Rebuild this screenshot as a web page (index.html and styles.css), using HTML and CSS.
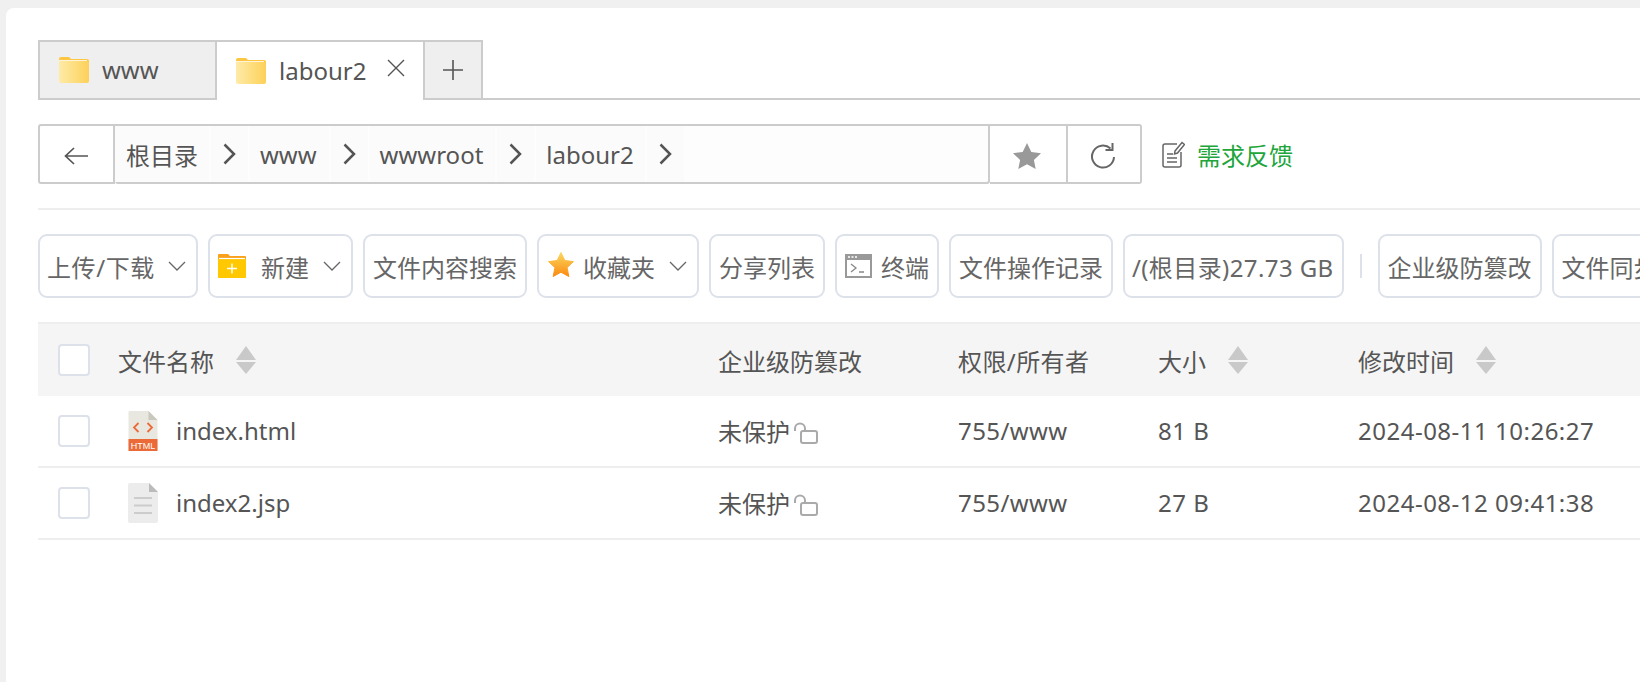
FILE: index.html
```html
<!DOCTYPE html>
<html lang="zh">
<head>
<meta charset="utf-8">
<title>文件管理</title>
<link rel="stylesheet" href="styles.css">
</head>
<body>
<svg class="defs" width="0" height="0" aria-hidden="true">
  <defs>
    <linearGradient id="folderGrad" x1="0" x2="1" y1="0" y2="0"><stop offset="0" stop-color="#feeba8"/><stop offset="1" stop-color="#fdd158"/></linearGradient>
    <linearGradient id="starGrad" x1="0" x2="0" y1="0" y2="1"><stop offset="0" stop-color="#fbd75c"/><stop offset="1" stop-color="#fb8a12"/></linearGradient>
    <symbol id="folder" viewBox="0 0 30 26"><path d="M0 2a2 2 0 0 1 2-2h8l2 2h16a2 2 0 0 1 2 2v2H0z" fill="#fdc743"/><path d="M0 4h28a2 2 0 0 1 2 2v18a2 2 0 0 1-2 2H2a2 2 0 0 1-2-2z" fill="url(#folderGrad)"/><path d="M0 3.500h28" stroke="#fff" stroke-opacity=".8" stroke-width="1"/></symbol>
    <symbol id="chev" viewBox="0 0 18 10"><path d="M1 1l8 8 8-8" fill="none" stroke="#666" stroke-width="1.300"/></symbol>
    <symbol id="crumb" viewBox="0 0 13 22"><path d="M1.500 1.500L11 11l-9.500 9.500" fill="none" stroke="#555" stroke-width="2.500"/></symbol>
    <symbol id="sort" viewBox="0 0 20 28"><path d="M10 0l10 14H0z" fill="#c9c9c9"/><path d="M0 16h20L10 28z" fill="#c9c9c9"/></symbol>
    <symbol id="lock" viewBox="0 0 24 22"><path d="M1 9V6.500a5 5 0 0 1 10 0V9" fill="none" stroke="#aaa" stroke-width="2"/><rect x="7" y="9" width="16" height="12" rx="2" fill="#fff" stroke="#aaa" stroke-width="2"/></symbol>
  </defs>
</svg>
<main class="card">
  <nav class="tabs">
    <div class="tab tab-first">
      <svg class="folder-icon"><use href="#folder"/></svg><span>www</span>
    </div>
    <div class="tab tab-active">
      <svg class="folder-icon"><use href="#folder"/></svg><span>labour2</span>
      <svg class="close-icon" viewBox="0 0 18 18"><path d="M1 1l16 16M17 1L1 17" stroke="#555" stroke-width="1.400" fill="none"/></svg>
    </div>
    <div class="tab tab-add">
      <svg class="plus-icon" viewBox="0 0 20 20"><path d="M10 0v20M0 10h20" stroke="#555" stroke-width="1.600" fill="none"/></svg>
    </div>
    <div class="tab-rest"></div>
  </nav>

  <div class="address">
    <button class="addr-btn back">
      <svg class="back-icon" viewBox="0 0 24 18"><path d="M24 9H1.500M10 1L1.500 9l8.500 8" fill="none" stroke="#555" stroke-width="1.700"/></svg>
    </button>
    <div class="path">
      <span class="seg seg-text seg-root">根目录</span><span class="seg seg-arrow"><svg class="crumb-icon"><use href="#crumb"/></svg></span>
      <span class="seg seg-text">www</span><span class="seg seg-arrow"><svg class="crumb-icon"><use href="#crumb"/></svg></span>
      <span class="seg seg-text">wwwroot</span><span class="seg seg-arrow"><svg class="crumb-icon"><use href="#crumb"/></svg></span>
      <span class="seg seg-text seg-last">labour2</span><span class="seg seg-arrow"><svg class="crumb-icon"><use href="#crumb"/></svg></span>
    </div>
    <button class="addr-btn star">
      <svg class="star-icon" viewBox="0 0 28 26"><path d="M14 0l4.300 9 9.700 1.200-7.100 6.700L22.700 26 14 21.300 5.300 26l1.800-9.100L0 10.200 9.700 9z" fill="#999"/></svg>
    </button>
    <button class="addr-btn refresh">
      <svg class="refresh-icon" viewBox="0 0 26 26"><path d="M20.500 5.500A11 11 0 1 0 24 14" fill="none" stroke="#666" stroke-width="2"/><path d="M22.500 0v7h-7" fill="none" stroke="#666" stroke-width="2"/></svg>
    </button>
    <a class="feedback">
      <svg class="feedback-icon" viewBox="0 0 23 27"><path d="M15 3H3a2 2 0 0 0-2 2v19a2 2 0 0 0 2 2h14a2 2 0 0 0 2-2V11" fill="none" stroke="#666" stroke-width="1.500"/><path d="M5 13h6M5 17h10M5 21h10" stroke="#666" stroke-width="1.500"/><path d="M13 10l7-8.500 2.500 2-7 8.500-3 1z" fill="none" stroke="#666" stroke-width="1.500"/></svg>
      <span>需求反馈</span>
    </a>
  </div>

  <div class="rule"></div>

  <div class="toolbar">
    <button class="tool tool-upload">上传/下载<svg class="chev-icon"><use href="#chev"/></svg></button>
    <button class="tool tool-new">
      <svg class="new-icon" viewBox="0 0 28 24"><path d="M0 1a1 1 0 0 1 1-1h9l2 2h15a1 1 0 0 1 1 1v3H0z" fill="#f9a11b"/><path d="M0 5h28v19H0z" fill="#ffc800"/><path d="M1 4.500h26" stroke="#fff" stroke-width="1.200"/><path d="M14 9.500v10M9 14.500h10" stroke="#fff" stroke-width="1.400"/></svg>
      <span>新建</span><svg class="chev-icon"><use href="#chev"/></svg>
    </button>
    <button class="tool">文件内容搜索</button>
    <button class="tool tool-fav">
      <svg class="fav-icon" viewBox="0 0 26 25"><path d="M13 .5l3.800 8 8.700 1.100-6.400 6 1.700 8.900-7.800-4.300-7.800 4.300 1.700-8.900-6.400-6 8.700-1.100z" fill="url(#starGrad)" stroke="url(#starGrad)" stroke-linejoin="round" stroke-width="1"/></svg>
      <span>收藏夹</span><svg class="chev-icon"><use href="#chev"/></svg>
    </button>
    <button class="tool">分享列表</button>
    <button class="tool tool-term">
      <svg class="term-icon" viewBox="0 0 27 24"><rect x="1" y="1" width="25" height="22" fill="#fff" stroke="#999" stroke-width="2"/><path d="M0 0h27v6H0z" fill="#999"/><path d="M3 3h2M6.500 3h2M10 3h2" stroke="#fff" stroke-width="1.500"/><path d="M6 10l5 4-5 4M14 18h5" fill="none" stroke="#888" stroke-width="1.300"/></svg>
      <span>终端</span>
    </button>
    <button class="tool">文件操作记录</button>
    <button class="tool tool-disk">/(根目录)27.73 GB</button>
    <span class="tool-sep"></span>
    <button class="tool">企业级防篡改</button>
    <button class="tool">文件同步</button>
  </div>

  <section class="table">
    <div class="row row-head">
      <div class="col-check"><span class="check"></span></div>
      <div class="col-name">文件名称<svg class="sort-icon"><use href="#sort"/></svg></div>
      <div class="col-guard">企业级防篡改</div>
      <div class="col-perm">权限/所有者</div>
      <div class="col-size">大小<svg class="sort-icon"><use href="#sort"/></svg></div>
      <div class="col-time">修改时间<svg class="sort-icon"><use href="#sort"/></svg></div>
    </div>
    <div class="row row-body">
      <div class="col-check"><span class="check"></span></div>
      <div class="col-name">
        <svg class="file-icon" viewBox="0 0 29 40"><path d="M0 1a1 1 0 0 1 1-1h19l9 9v31H0z" fill="#e9e8e0"/><path d="M20 0l9 9h-9z" fill="#c9c8be"/><path d="M10 12l-4.500 4.500L10 21M19 12l4.500 4.500L19 21" fill="none" stroke="#ec6a37" stroke-width="1.800"/><path d="M0 28h29v12H0z" fill="#ec6a37"/><text class="file-tag" x="14.500" y="37.500" text-anchor="middle">HTML</text></svg>
        <span class="file-name">index.html</span>
      </div>
      <div class="col-guard">未保护<svg class="lock-icon"><use href="#lock"/></svg></div>
      <div class="col-perm">755/www</div>
      <div class="col-size">81 B</div>
      <div class="col-time">2024-08-11 10:26:27</div>
    </div>
    <div class="row row-body">
      <div class="col-check"><span class="check"></span></div>
      <div class="col-name">
        <svg class="file-icon" viewBox="0 0 30 40"><path d="M0 2a2 2 0 0 1 2-2h19l9 9v29a2 2 0 0 1-2 2H2a2 2 0 0 1-2-2z" fill="#ececec"/><path d="M21 0l9 9h-9z" fill="#bbb"/><path d="M6 15h18M6 22.500h18M6 30h18" stroke="#ccc" stroke-width="2"/></svg>
        <span class="file-name">index2.jsp</span>
      </div>
      <div class="col-guard">未保护<svg class="lock-icon"><use href="#lock"/></svg></div>
      <div class="col-perm">755/www</div>
      <div class="col-size">27 B</div>
      <div class="col-time">2024-08-12 09:41:38</div>
    </div>
  </section>
</main>
</body>
</html>
```
FILE: styles.css
```css
* { box-sizing: border-box; }
html, body { height: 100%; margin: 0; overflow: hidden; }
body {
  padding: 8px 0 0 6px;
  background: #f0f0f0;
  color: #555;
  font-family: "Noto Sans", "Noto Sans CJK SC", sans-serif;
  font-size: 24px;
}
.defs { position: absolute; }
.card {
  height: 100%;
  padding: 32px 0 0 32px;
  background: #fff;
  border-radius: 8px 0 0 0;
  overflow: hidden;
}
button { font: inherit; color: inherit; background: none; margin: 0; }

/* tabs */
.tabs { display: flex; height: 60px; }
.tab {
  display: flex;
  align-items: center;
  padding-bottom: 2px;
  border: 2px solid #ccc;
  border-left: 0;
  background: #efefef;
}
.tab-first { width: 179px; padding-left: 19px; border-left: 2px solid #ccc; }
.tab-active { width: 208px; padding-left: 19px; background: #fff; border-bottom: 0; }
.tab-add { width: 58px; justify-content: center; }
.tab-rest { flex: 1; border-bottom: 2px solid #ccc; }
.folder-icon { width: 30px; height: 26px; margin-right: 13px; margin-top: 2px; flex: none; }
.close-icon { width: 18px; height: 18px; margin-left: 21px; margin-top: -4px; }
.plus-icon { width: 20px; height: 20px; margin-top: 2px; }

/* address bar */
.address { display: flex; height: 60px; margin-top: 24px; align-items: stretch; }
.addr-btn {
  display: flex;
  align-items: center;
  justify-content: center;
  padding: 3px 2px 0 0;
  border: 2px solid #ccc;
  border-left: 0;
}
.back { width: 77px; border-left: 2px solid #ccc; border-radius: 3px 0 0 3px; }
.star { width: 78px; }
.refresh { width: 74px; border-radius: 0 3px 3px 0; }
.path {
  display: flex;
  width: 875px;
  border: solid #ccc;
  border-width: 2px 2px 2px 0;
  background: #fdfdfd;
  border-radius: 0 0 3px 3px;
}
.seg { display: flex; align-items: center; background: #fbfbfb; margin-right: 2px; }
.seg-text { padding: 0 12px 0 10px; }
.seg-root { padding: 0 11px; }
.seg-last { padding-right: 11px; }
.seg-arrow { padding: 0 12px; }
.crumb-icon { width: 13px; height: 22px; }
.back-icon { width: 24px; height: 18px; }
.star-icon { width: 28px; height: 26px; }
.refresh-icon { width: 26px; height: 26px; }
.feedback { display: flex; align-items: center; margin-left: 20px; color: #20a53a; }
.feedback-icon { width: 23px; height: 27px; margin-right: 12px; }

.rule { height: 2px; margin-top: 24px; background: #eee; }

/* toolbar */
.toolbar { display: flex; align-items: center; gap: 10px; height: 64px; margin-top: 24px; white-space: nowrap; }
.tool {
  display: flex;
  flex: none;
  align-items: center;
  height: 64px;
  padding: 0 8px;
  border: 2px solid #dde1ea;
  border-radius: 9px;
  color: #666;
}
.tool-upload { padding-left: 7px; letter-spacing: .6px; }
.tool-disk { padding-left: 7px; letter-spacing: .4px; }
.chev-icon { width: 18px; height: 10px; margin-left: 14px; margin-right: 2px; }
.tool-upload .chev-icon { margin-left: 13px; }
.new-icon { width: 28px; height: 24px; margin-right: 15px; }
.fav-icon { width: 26px; height: 25px; margin-left: 1px; margin-right: 9px; margin-top: -3px; }
.term-icon { width: 27px; height: 24px; margin-right: 9px; }
.tool-sep { width: 2px; height: 24px; margin: 0 6px; background: #dde1ea; flex: none; }

/* table */
.table { margin-top: 24px; }
.row {
  display: grid;
  grid-template-columns: 80px 600px 240px 200px 200px 1fr;
  align-items: center;
  height: 72px;
  border-bottom: 2px solid #eee;
}
.row-head { height: 74px; background: #f5f5f5; border-top: 2px solid #eee; border-bottom: 0; }
.col-check { padding-left: 20px; display: flex; }
.check {
  width: 32px;
  height: 32px;
  border: 2px solid #dde1ea;
  border-radius: 4px;
  background: #fff;
}
.col-name, .col-guard, .col-size, .col-time { display: flex; align-items: center; }
.col-perm { letter-spacing: .4px; }
.row-body .col-size, .row-body .col-time { letter-spacing: .5px; }
.row-body .col-guard, .row-body .col-perm, .row-body .col-size, .row-body .col-time, .file-name { padding-bottom: 2px; }
.sort-icon { width: 20px; height: 28px; margin-left: 22px; }
.lock-icon { width: 24px; height: 22px; margin-left: 4px; margin-top: 6px; }
.file-icon { width: 30px; height: 40px; margin-left: 10px; margin-right: 18px; flex: none; }
.file-tag { font-family: "Liberation Sans", sans-serif; font-size: 9px; fill: #fff; }
```
